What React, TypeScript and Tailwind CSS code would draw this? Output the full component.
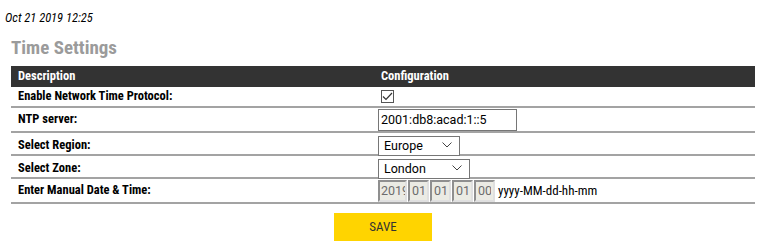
import React, { useState } from 'react';

const Chevron = () => (
  <svg width="10" height="6" viewBox="0 0 10 6" className="pointer-events-none absolute right-2 top-1/2 -translate-y-1/2">
    <path d="M0.5 0.5 L5 5 L9.5 0.5" fill="none" stroke="#444" strokeWidth="1" />
  </svg>
);

const Row = ({ label, children, h }: { label: string; children: React.ReactNode; h: string }) => (
  <div className={`grid grid-cols-[367px_1fr] items-center border-b-2 border-[#a3a3a3] ${h}`}>
    <div className="pl-[7px] font-['Roboto_Condensed',sans-serif] text-[12.5px] font-bold text-black">{label}</div>
    <div className="flex items-center">{children}</div>
  </div>
);

const App = () => {
  const [ntp, setNtp] = useState<boolean>(true);
  const [server, setServer] = useState<string>('2001:db8:acad:1::5');
  const [region, setRegion] = useState<string>('Europe');
  const [zone, setZone] = useState<string>('London');

  return (
    <div className="w-[758px] h-[242px] bg-white font-['Roboto',sans-serif] overflow-hidden">
      <div className="pl-[5px] pt-[10px] font-['Roboto_Condensed',sans-serif] text-[12.5px] italic text-black leading-[15px]">
        Oct 21 2019 12:25
      </div>
      <h2 className="ml-[11px] mt-[12px] font-['Roboto_Condensed',sans-serif] text-[19px] font-bold text-[#9b9b9b] leading-[22px]">
        Time Settings
      </h2>

      <div className="ml-[11px] mt-[7px] w-[744px]">
        {/* Header */}
        <div className="grid grid-cols-[370px_1fr] items-center h-[21px] bg-[#333333] text-white font-['Roboto_Condensed',sans-serif] text-[12.5px] font-bold">
          <div className="pl-[7px]">Description</div>
          <div>Configuration</div>
        </div>

        <Row label="Enable Network Time Protocol:" h="h-[21px]">
          <button
            className="ml-[3px] w-[13px] h-[13px] border border-[#555] bg-white flex items-center justify-center"
            onClick={() => setNtp(!ntp)}
          >
            {ntp && (
              <svg width="11" height="9" viewBox="0 0 11 9">
                <path d="M1 4.5 L4 7.5 L10 1" fill="none" stroke="#333" strokeWidth="1.2" />
              </svg>
            )}
          </button>
        </Row>

        <Row label="NTP server:" h="h-[25px]">
          <input
            className="w-[139px] h-[22px] border border-[#767676] px-[2px] text-[12.5px] text-black outline-none"
            value={server}
            onChange={(e) => setServer(e.target.value)}
          />
        </Row>

        <Row label="Select Region:" h="h-[23px]">
          <div className="relative">
            <select
              className="appearance-none w-[82px] h-[20px] border border-[#767676] bg-white pl-[5px] text-[12.5px] text-black outline-none"
              value={region}
              onChange={(e) => setRegion(e.target.value)}
            >
              <option>Europe</option>
              <option>America</option>
              <option>Asia</option>
            </select>
            <Chevron />
          </div>
        </Row>

        <Row label="Select Zone:" h="h-[23px]">
          <div className="relative">
            <select
              className="appearance-none w-[92px] h-[20px] border border-[#767676] bg-white pl-[5px] text-[12.5px] text-black outline-none"
              value={zone}
              onChange={(e) => setZone(e.target.value)}
            >
              <option>London</option>
              <option>Paris</option>
              <option>Berlin</option>
            </select>
            <Chevron />
          </div>
        </Row>

        <Row label="Enter Manual Date & Time:" h="h-[25px]">
          <div className="flex items-center gap-[1px]">
            {['2019', '01', '01', '01', '00'].map((v, i) => (
              <input
                key={i}
                disabled
                defaultValue={v}
                className={`${i === 0 ? 'w-[29px] pl-[1px] pr-0' : 'w-[21px] px-[2px]'} h-[22px] bg-[#ebebe4] border-2 border-t-[#8f8f8f] border-l-[#8f8f8f] border-r-[#e0e0e0] border-b-[#e0e0e0] text-[12.5px] text-[#6d6d6d] outline-none overflow-hidden`}
              />
            ))}
            <span className="ml-[2px] font-['Roboto_Condensed',sans-serif] text-[13px] text-black">yyyy-MM-dd-hh-mm</span>
          </div>
        </Row>

        <div className="flex justify-center mt-[9px]">
          <button className="w-[98px] h-[28px] bg-[#ffd400] font-['Roboto_Condensed',sans-serif] text-[13px] text-[#333]">
            SAVE
          </button>
        </div>
      </div>
    </div>
  );
};

export default App;
